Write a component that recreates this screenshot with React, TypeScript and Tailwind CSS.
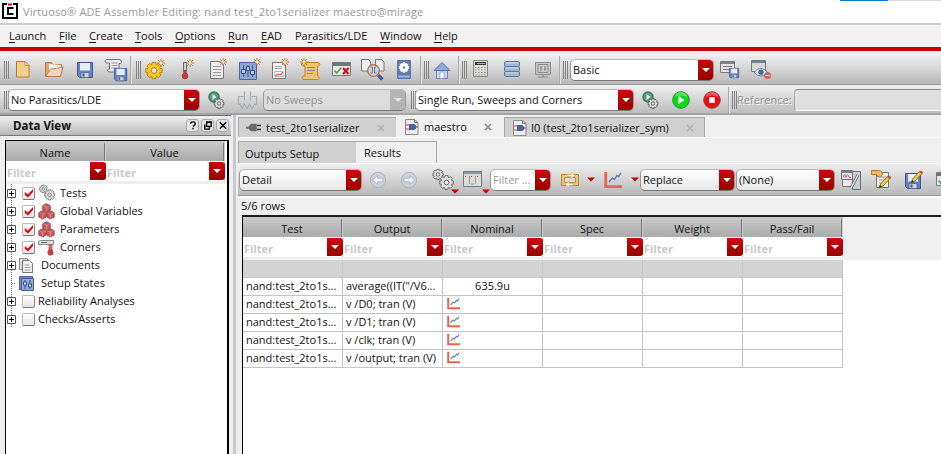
import React from "react";
import clsx from "clsx";

type P = { className?: string };

/* ---------- shared shapes ---------- */

function Svg({ children, className, box = "0 0 24 24" }: { children: React.ReactNode; className?: string; box?: string }) {
  return (
    <svg viewBox={box} className={clsx("block shrink-0", className ?? "size-6")} fill="none">
      {children}
    </svg>
  );
}

const Spark = ({ x = 17, y = 6 }: { x?: number; y?: number }) => (
  <g transform={`translate(${x} ${y})`} stroke="#bd7433" strokeWidth=".9">
    <path d="M-4 0h8M0-4v8M-3-3l6 6M3-3l-6 6" />
    <circle r="1.500" fill="#ffe9a8" stroke="none" />
  </g>
);

const Floppy = ({ x, y, s = 1 }: { x: number; y: number; s?: number }) => (
  <g transform={`translate(${x} ${y}) scale(${s})`}>
    <path d="M.5.5h15v15h-13l-2-2z" fill="#6585c2" stroke="#3d5590" />
    <path d="M3 1h10v7.500H3z" fill="#e8eefa" />
    <path d="M4 10.500h8v5H4z" fill="#cfd5e0" stroke="#44598a" strokeWidth=".7" />
    <path d="M5.500 11.500h2v3h-2z" fill="#3d5590" />
  </g>
);

/* Eight-toothed wheel outline with outer radius r */
function cogPath(r: number) {
  const pts: string[] = [];
  for (let i = 0; i < 8; i++) {
    [[-0.33, 0.78], [-0.22, 1], [0.22, 1], [0.33, 0.78]].forEach(([da, k]) => {
      const a = (i * Math.PI) / 4 + da;
      pts.push(`${(Math.cos(a) * r * k).toFixed(2)} ${(Math.sin(a) * r * k).toFixed(2)}`);
    });
  }
  return `M${pts.join("L")}Z`;
}

const Cog = ({ x, y, r, fill, stroke, hole = "#e4e4e4" }: { x: number; y: number; r: number; fill: string; stroke: string; hole?: string }) => (
  <g transform={`translate(${x} ${y})`} stroke={stroke} strokeWidth=".9" strokeLinejoin="round">
    <path d={cogPath(r)} fill={fill} />
    <circle r={r * 0.34} fill={hole} />
  </g>
);

const Pencil = ({ x, y }: { x: number; y: number }) => (
  <g transform={`translate(${x} ${y})`}>
    <path d="M0 12l1.500-4L9 0l2.500 2L4 10z" fill="#f4cf3c" stroke="#6b5a30" strokeWidth=".8" />
    <path d="M8 1l1.600-1.600L12.300 1 10.600 3z" fill="#d8463c" />
    <path d="M0 12l1.300-3 1.700 1.700z" fill="#333" />
  </g>
);

const Arrow = ({ className }: P) => (
  <svg viewBox="0 0 8 5" className={clsx("block h-[5px] w-2 shrink-0", className)}>
    <path d="M0 .5h8L4 4.500z" fill="#c00" />
  </svg>
);

/* ---------- toolbar icons ---------- */

const NewFile = () => (
  <Svg>
    <path d="M5.500 3.500h8.500l4 4v11.500H5.500z" fill="#f2d08c" stroke="#b57d30" />
    <path d="M14 3.500v4h4z" fill="#fff0c8" stroke="#bd8128" strokeWidth=".8" />
  </Svg>
);
const OpenFolder = () => (
  <Svg>
    <path d="M3.500 18V4.500h6l1 2h9V10" fill="#e5a566" stroke="#b8763a" />
    <path d="M7 6l12 1-1 5-11 2z" fill="#fff" />
    <path d="M3.500 18.500l5-7.500c3 0 8-1 12.500-2l-2.500 9.500z" fill="#ecd8c0" stroke="#b8804a" />
  </Svg>
);
const Save = () => <Svg><Floppy x={4} y={4} /></Svg>;
const SaveScript = () => (
  <Svg>
    <path d="M3 1.500h12c3 0 3 4 1 4h-1V14H6c-3 0-3-3-.5-3V5H3C.5 5 .500 1.500 3 1.500z" fill="#ececec" stroke="#6d6d6d" />
    <path d="M7.500 5h6M7.500 7.500h6M7.500 10h6" stroke="#999" />
    <Floppy x={10} y={10} s={0.82} />
  </Svg>
);
const SetupGear = () => (
  <Svg>
    <Cog x={10} y={12.500} r={8.400} fill="#f5c822" stroke="#b87812" />
    <Spark x={17} y={5} />
  </Svg>
);
const Thermo = () => (
  <Svg>
    <path d="M8.500 4.500h3v10h-3z" fill="#c8d2d8" stroke="#667" />
    <path d="M9 12h2v5H9z" fill="#d2353c" />
    <circle cx="10" cy="18" r="2.800" fill="#d2353c" stroke="#a3393f" />
    <Spark x={15} y={5} />
  </Svg>
);
const DocStar = () => (
  <Svg>
    <path d="M4.500 3.500h9l4 3v14h-13z" fill="#ededed" stroke="#777" />
    <path d="M7 8.500h8M7 11.500h8M7 14.500h8M7 17.500h8" stroke="#999" />
    <Spark x={17} y={4} />
  </Svg>
);
const Sliders = () => (
  <Svg>
    <path d="M2.500 4.500h17v17h-17z" fill="#91a9d2" stroke="#4a659c" />
    <path d="M6.500 7v12M11 7v12M15.500 7v12" stroke="#3f5b90" />
    <path d="M4.500 11.500h4v4h-4zM9.500 8.500h3v4h-3zM13.500 12.500h4v4h-4z" fill="#b9cbec" stroke="#304f86" />
    <Spark x={20} y={4} />
  </Svg>
);
const ChartDoc = () => (
  <Svg>
    <path d="M4.500 4.500h9l4 3v13h-13z" fill="#f2f2f2" stroke="#777" />
    <path d="M7 8.500h7M7 10.500h7" stroke="#aaa" />
    <path d="M7 13.500h8v5H7z" fill="#fff" stroke="#999" strokeWidth=".7" />
    <path d="M7 18l3-2 2 1 3-3" stroke="#d22" />
    <Spark x={17} y={4} />
  </Svg>
);
const Scroll = () => (
  <Svg>
    <path d="M4 4.500h15c3 1 2 3.500-.5 4V18c2 0 2.500 3.500 0 3.500H5c-3-.5-2-4 1-3.500V8.500C2 8 1 5 4 4.500z" fill="#efbf74" stroke="#c08433" />
    <path d="M8 9.500h8M8 12.500h8M8 15.500h6" stroke="#7d89a8" />
    <Spark x={5} y={4} />
  </Svg>
);
const CheckCross = ({ className }: P) => (
  <Svg className={className}>
    <path d="M2.500 4.500h18v13h-18z" fill="#e6e8e9" stroke="#777" />
    <path d="M3 5h17v3H3z" fill="#6c7880" />
    <path d="M4.500 12.500l2.200 2.500L11 10" stroke="#48a645" strokeWidth="1.800" />
    <path d="M13 10l5.500 6m0-6L13 16" stroke="#d60d1d" strokeWidth="2.200" />
  </Svg>
);
const SearchDocs = () => (
  <Svg>
    <path d="M.5 1.500h7l2 2.500v9h-9zM14.500 1.500h6l2.500 2.500v9h-8.500z" fill="#eee" stroke="#777" />
    <path d="M17 17l4.500 4.500" stroke="#3e5c8c" strokeWidth="3.200" />
    <circle cx="12.500" cy="12.500" r="5.800" fill="#ced9e7" fillOpacity=".9" stroke="#b56c3d" strokeWidth="1.300" />
    <path d="M9.500 9h2v6h-2M15.500 9h-2v6h2" stroke="#6b7788" />
  </Svg>
);
const Book = () => (
  <Svg>
    <path d="M5.500 2.500h13v18h-13z" fill="#5c7bb2" stroke="#5874a6" />
    <path d="M6 17.500h12v2H6z" fill="#9fb3d6" />
    <Cog x={12} y={9.500} r={4.800} fill="#fff" stroke="#fff" hole="#5576af" />
  </Svg>
);
const Home = () => (
  <Svg>
    <path d="M6.500 11v9.500h11V11" fill="#c8d5ee" stroke="#6f83ad" />
    <path d="M4 12.500L12 4.500l8 8z" fill="#8faadb" stroke="#5873a8" />
    <path d="M10 14h4v6.500h-4z" fill="#fff" stroke="#8698bb" strokeWidth=".7" />
  </Svg>
);
const Calc = () => (
  <Svg>
    <path d="M4.500 2.500h14v16h-14z" fill="#dcdcd8" stroke="#888" />
    <path d="M6 4h11v3H6z" fill="#343a32" />
    <path d="M8 5.500h8" stroke="#9bd820" />
    <path d="M6 9.500h11M6 12h11M6 14.500h11M6 17h11" stroke="#8b8c88" strokeWidth="1.100" strokeDasharray="1.500 1.500" />
  </Svg>
);
const Database = () => (
  <Svg>
    {[3.500, 8.500, 13.500].map((y) => (
      <g key={y}>
        <rect x="4.500" y={y} width="15" height="5" rx="1.200" fill="#9fb4cf" stroke="#60789b" />
        <path d={`M6 ${y + 1.500}h12`} stroke="#cfdcec" />
      </g>
    ))}
  </Svg>
);
const Monitor = () => (
  <Svg>
    <path d="M4.500 4.500h15v12h-15z" fill="#c9c9c9" stroke="#8e8e8e" />
    <path d="M7 6.500h10v8H7z" stroke="#8e8e8e" />
    <path d="M10 8v5m4-5v5M9 10h2m2 1h2M12 17v2M7 19h10" stroke="#858585" />
  </Svg>
);
const FormSave = () => (
  <Svg>
    <path d="M2.500 3.500h14v11h-14z" fill="#e4e4e4" stroke="#777" />
    <path d="M3 4h13v2H3z" fill="#6d8795" />
    <path d="M5 8.500h9M5 11.500h9" stroke="#777" />
    <Floppy x={11} y={10} s={0.63} />
  </Svg>
);
const EyeWindow = () => (
  <Svg>
    <path d="M2.500 2.500h14v11h-14z" fill="#d8d8d8" stroke="#777" />
    <path d="M3 3h13v2H3z" fill="#6d8795" />
    <path d="M5 14.500q6.500-8 14 0-7 7-14 0z" fill="#e2ebf6" stroke="#6f87ac" />
    <circle cx="12" cy="14.300" r="2.700" fill="#4a6c9f" />
    <circle cx="18.500" cy="17.500" r="3.500" fill="#cf6565" />
    <path d="M16.500 17.500h4" stroke="#fff" />
  </Svg>
);
const RunOptions = () => (
  <Svg>
    <circle cx="10" cy="9" r="5" fill="#5d9c79" stroke="#3a7f5a" strokeWidth="1.500" />
    <path d="M8.500 6v6l4-3z" fill="#e5f4eb" />
    <Cog x={15} y={15.500} r={5} fill="#ddd" stroke="#555" />
  </Svg>
);
const Parasitic = () => (
  <Svg>
    <path d="M2.500 17V8.500h6M15.500 8.500h5V17M8.500 3.500v9M14.500 3.500v9M2.500 17l1.500-1 2 4.500 2.500-4.500 2.500 4.500 2.500-4.500 2.500 4.500 2.500-4.500 2 1" stroke="#a5acb9" strokeWidth="1.200" />
  </Svg>
);
const Orb = ({ stop }: { stop?: boolean }) => (
  <Svg>
    <circle cx="12" cy="12" r="8.300" fill={stop ? "#e80a14" : "#08d914"} stroke={stop ? "#a2383d" : "#299030"} />
    <path d="M5.500 9q1.500-5 6.500-5t6.500 5q-6.500-3-13 0z" fill="#fff" fillOpacity=".3" />
    {stop ? <path d="M9.500 9.500h5v5h-5z" fill="#fff" stroke="#ffd0d0" /> : <path d="M9.500 8v8l6-4z" fill="#fff" />}
  </Svg>
);
const Nav = ({ right }: { right?: boolean }) => (
  <Svg>
    <circle cx="12" cy="12" r="7.700" fill="#c9d1dd" stroke="#a9b3c3" />
    <path transform={right ? "rotate(180 12 12)" : undefined} d="M6.500 12l5-4.500v2.700h5.500v3.600h-5.500v2.700z" fill="#f1f4f8" stroke="#a9b3c3" strokeWidth=".9" />
  </Svg>
);
const Gears = ({ className }: P) => (
  <Svg className={className}>
    <Cog x={7} y={6.500} r={5.300} fill="#dedede" stroke="#606060" />
    <Cog x={15.500} y={14.500} r={7} fill="#dedede" stroke="#606060" />
  </Svg>
);
const Columns = () => (
  <Svg>
    <path d="M2.500 3.500h18v15h-18z" fill="#dadada" stroke="#727b80" />
    <path d="M3 4h17v2H3z" fill="#8d989c" />
    <path d="M8.500 8v8m6-8v8M10 16h3" stroke="#999" />
    <path d="M4 8.500h3M10 8.500h3M16 8.500h3" stroke="#cb4a4a" strokeDasharray="1 2" />
  </Svg>
);
const Swap = () => (
  <Svg>
    <path d="M3.500 6.500h17v11h-17z" fill="#ecc47c" stroke="#c08533" />
    <path d="M6.500 9.500h11v5h-11z" fill="#dcdcd8" stroke="#c28b3d" />
    <path d="M13 4.500l4 3-4 3v-2H9v-2h4zM11 13.500l-4 3 4 3v-2h4v-2h-4z" fill="#fff6da" stroke="#c8a060" strokeWidth=".5" />
  </Svg>
);
const Chart = ({ className }: P) => (
  <Svg className={className} box="0 0 18 18">
    <path d="M1.700 1v14.700H18" stroke="#ee6350" strokeWidth="2.800" />
    <path d="M5 11l3.500-4 2 1.500 2.500-4 1.500 1L17 2" stroke="#5f7db5" strokeWidth="1.400" />
  </Svg>
);
const WaveEdit = () => (
  <Svg>
    <path d="M2.500 2.500h11v9h-11zM3.500 11.500h13v7h-13z" fill="#e7e7e7" stroke="#777" />
    <path d="M3 3h10v2H3z" fill="#71868f" />
    <path d="M4 9.500q1.500-6 3 0 1.500-6 3 0h2" stroke="#c65682" />
    <path d="M13.500 3.500h8v18h-8z" fill="#c9cdd1" stroke="#6c7173" />
    <path d="M12 20l7-13" stroke="#555" strokeWidth="2.800" />
    <path d="M12 20l7-13" stroke="#eee" strokeWidth="1.500" />
  </Svg>
);
const DocEdit = () => (
  <Svg>
    <path d="M6.500 4.500h12v15h-12z" fill="#eee" stroke="#777" />
    <path d="M9 9h7m-7 3h7m-7 3h5" stroke="#999" />
    <path d="M1.500 2.500h7q4 0 4 4-2 4-5 2l-1-2h-5z" fill="#f2b866" stroke="#b57a32" />
    <Pencil x={9} y={8} />
  </Svg>
);
const SaveEdit = () => <Svg><Floppy x={2} y={5} /><Pencil x={8} y={3} /></Svg>;

/* ---------- small icons ---------- */

const Cubes = () => (
  <Svg className="size-[17px]" box="0 0 17 17">
    {[[8.500, 4.800], [4.600, 11.800], [12.400, 11.800]].map(([x, y]) => (
      <g key={x} transform={`translate(${x} ${y})`}>
        <path d="M0-4l3.700 1.800v4.400L0 4l-3.700-1.800v-4.400z" fill="#c95858" stroke="#a04447" />
        <path d="M-3-2L0-.5 3-2M0-.5V3.500" stroke="#e29a9a" strokeWidth=".8" />
      </g>
    ))}
  </Svg>
);
const CornerIcon = () => (
  <Svg className="size-[17px]" box="0 0 17 17">
    <path d="M.500 5.500v-3l2-1h13v4z" fill="#ddd" stroke="#888" />
    <path d="M3 3.500h6" stroke="#666" />
    <path d="M11 5.500h3v7h-3z" fill="#d66" stroke="#965" strokeWidth=".8" />
    <circle cx="12.500" cy="13.500" r="2.700" fill="#d33c3c" stroke="#a33" strokeWidth=".6" />
  </Svg>
);
const Docs = () => (
  <Svg className="size-[17px]" box="0 0 17 17">
    <path d="M.5 1.500h8v11h-8z" fill="#ddd" stroke="#888" />
    <path d="M3.500 3.500h7l3 3v9h-10z" fill="#f1f1ed" stroke="#777" />
    <path d="M5.500 8h5m-5 2.500h6m-6 2.500h6" stroke="#aaa" />
  </Svg>
);
const States = () => (
  <Svg className="size-[17px]" box="0 0 17 17">
    <path d="M.5 1.500h13v13H.5z" fill="#6d88bb" stroke="#5269a0" />
    <path d="M2.500 3.500h12v12h-12z" fill="#93aad6" stroke="#465f93" />
    <path d="M6 5v9M11 5v9" stroke="#344f85" />
    <path d="M4.500 7h3v3h-3zM9.500 9h3v3h-3z" fill="#dbe5f6" stroke="#344f85" />
  </Svg>
);
const Plug = () => (
  <Svg className="h-4 w-[15px]" box="0 0 15 16">
    <path d="M0 7h2.500l2.500-3h5.500v7H5L2.500 8.500H0z" fill="#686868" stroke="#777" strokeWidth=".6" />
    <path d="M11 5.500h4M11 9.500h4" stroke="#333" strokeWidth="1.500" />
  </Svg>
);
const SchemDoc = () => (
  <Svg className="size-4" box="0 0 16 16">
    <path d="M1.500.5h9l3.500 3v12H1.500z" fill="#ececec" stroke="#888" />
    <path d="M10.500.5v3H14" stroke="#777" />
    <path d="M2 6h4m-4 4h4m6-2h2" stroke="#d33" strokeWidth="1.200" />
    <path d="M5 5h5q2.500 1 2.500 3T10 11H5z" fill="#46659f" />
  </Svg>
);
const Close = ({ className }: P) => (
  <Svg className={clsx("size-2", className)} box="0 0 8 8"><path d="M1 1l6 6m0-6L1 7" stroke="currentColor" strokeWidth="1.700" /></Svg>
);

/* ---------- controls ---------- */

const Grip = ({ className }: P) => (
  <div className={clsx("h-[18px] w-[5px] shrink-0 border-x border-[#858585] px-px", className)}>
    <div className="mx-auto h-full w-px bg-[#858585]" />
  </div>
);
const Break = ({ className }: P) => (
  <div className={clsx("h-full w-[2px] shrink-0 border-l border-[#aaa] bg-[#e4e4e4]", className)} />
);

function Drop({ className, off }: P & { off?: boolean }) {
  return (
    <div className={clsx("flex shrink-0 items-center justify-center rounded-r-[3px]", off ? "bg-[#b4b4b4]" : "bg-linear-to-b from-[#c90b0b] to-[#970000]", className)}>
      <svg viewBox="0 0 8 4" className="h-1 w-2"><path d="M0 0h8L4 4z" fill={off ? "#e4e4e4" : "#fff"} /></svg>
    </div>
  );
}

function Combo({ text, className, off, face = "bg-white" }: P & { text: string; off?: boolean; face?: string }) {
  return (
    <div className={clsx("flex h-[22px] shrink-0 overflow-hidden rounded-[5px] border border-[#999] border-t-[#bbb] border-b-[#777]", off ? "bg-[#dcdcdc]" : face, className)}>
      <div className={clsx("min-w-0 flex-1 overflow-hidden pl-[2px] leading-[20px] whitespace-nowrap", off && "text-[#929292]")}>{text}</div>
      <Drop off={off} className="-my-px -mr-px w-4" />
    </div>
  );
}

function Menu({ text, k = 0, className }: P & { text: string; k?: number }) {
  return (
    <span className={clsx("block shrink-0 whitespace-nowrap", className)}>
      {text.slice(0, k)}
      <span className="underline decoration-1 underline-offset-2">{text[k]}</span>
      {text.slice(k + 1)}
    </span>
  );
}

function Filter({ className }: P) {
  return (
    <div className={clsx("flex h-[20px] shrink-0 border-r border-[#ddd] bg-white", className)}>
      <span className="flex-1 pl-px leading-[23px] font-bold text-[#cacaca]">Filter</span>
      <Drop className="mt-px -mr-px h-[18px] w-4" />
    </div>
  );
}

function HeaderCell({ text, className, pad = "pt-px" }: P & { text: string; pad?: string }) {
  return (
    <div className={clsx("flex shrink-0 bg-linear-to-b from-[#c9c9c9] to-[#ababab]", className)}>
      <span className={clsx("flex-1 text-center leading-[20px]", pad)}>{text}</span>
      <span className="mt-[2px] h-[18px] w-[2px] border-r border-[#ccc] bg-[#777]" />
    </div>
  );
}

type Node = { label: string; icon?: React.ReactNode; check?: boolean; leaf?: boolean };
const NODES: Node[] = [
  { label: "Tests", icon: <Gears className="size-[18px]" />, check: true },
  { label: "Global Variables", icon: <Cubes />, check: true },
  { label: "Parameters", icon: <Cubes />, check: true },
  { label: "Corners", icon: <CornerIcon />, check: true },
  { label: "Documents", icon: <Docs /> },
  { label: "Setup States", icon: <States />, leaf: true },
  { label: "Reliability Analyses", check: false },
  { label: "Checks/Asserts", check: false },
];

function TreeRow({ node }: { node: Node }) {
  return (
    <div className="flex h-[18px] items-center">
      <div className={clsx("flex h-full shrink-0 items-center", node.check === undefined ? "w-[13px]" : "w-[14px]")}>
        <svg viewBox="0 0 10 18" className="h-[18px] w-[10px]" fill="none">
          <path d="M5.500 0v18" stroke="#777" strokeDasharray="1 1" />
          {node.leaf ? (
            <path d="M6 9.500h4" stroke="#777" strokeDasharray="1 1" />
          ) : (
            <>
              <path d="M1.500 5.500h8v8h-8z" fill="#fff" stroke="#555" />
              <path d="M3 9.500h5M5.500 7v5" stroke="#000" />
            </>
          )}
        </svg>
      </div>
      {node.check !== undefined && (
        <div className="mr-[3px] ml-[2px] flex size-[13px] shrink-0 items-center justify-center rounded-[2px] border border-[#bbb] border-r-[#888] border-b-[#777] bg-linear-to-b from-white to-[#e5e5e5]">
          {node.check && (
            <svg viewBox="0 0 10 10" className="size-[10px]"><path d="M.8 4l3 2.500L9 1v3L4 9.500.8 7z" fill="#d80b12" /></svg>
          )}
        </div>
      )}
      {node.icon && <div className="flex w-[22px] shrink-0 items-center">{node.icon}</div>}
      <span className="leading-[18px] whitespace-nowrap">{node.label}</span>
    </div>
  );
}

const COLUMNS = ["Test", "Output", "Nominal", "Spec", "Weight", "Pass/Fail"];
const RESULTS = [
  { output: 'average((IT("/V6...', value: "635.9u" },
  { output: "v /D0; tran (V)" },
  { output: "v /D1; tran (V)" },
  { output: "v /clk; tran (V)" },
  { output: "v /output; tran (V)" },
];

/* ---------- page ---------- */

export default function App() {
  return (
    <div className="flex h-[454px] w-[941px] flex-col overflow-hidden bg-[#efefef] font-['Open_Sans','Noto_Sans',sans-serif] text-[11px] text-[#111]">
      <header className="flex h-[23px] shrink-0 bg-white">
        <svg viewBox="0 0 16 16" className="mt-[3px] ml-[2px] size-4 shrink-0" fill="none">
          <path d="M5 1H1v14h14V1h-4" stroke="#000" strokeWidth="2" />
          <path d="M10.500 6V5H6v6h4.500v-1" stroke="#000" strokeWidth="2" />
          <path d="M6 1.500h4" stroke="#d00" strokeWidth="2" />
        </svg>
        <span className="ml-[5px] leading-[24px] tracking-[0.14px] whitespace-nowrap text-[#999]">Virtuoso® ADE Assembler Editing: nand test_2to1serializer maestro@mirage</span>
        <div className="ml-auto flex h-px w-[101px]"><i className="w-[48px] bg-[#0878d0]" /><i className="flex-1 bg-[#ddd]" /></div>
      </header>
      <nav className="flex h-6 shrink-0 border-t-2 border-[#ccc] bg-[#f2f2f2] pl-[9px] leading-[22px]">
        <Menu text="Launch" className="w-[50px]" />
        <Menu text="File" className="w-[30px]" />
        <Menu text="Create" className="w-[46px]" />
        <Menu text="Tools" className="w-10" />
        <Menu text="Options" className="w-[53px]" />
        <Menu text="Run" className="w-[33px]" />
        <Menu text="EAD" className="w-[34px]" />
        <Menu text="Parasitics/LDE" k={2} className="w-[85px]" />
        <Menu text="Window" className="w-[54px]" />
        <Menu text="Help" />
      </nav>
      <div className="h-1 shrink-0 bg-[#c00]" />

      <div className="flex h-[34px] shrink-0 items-center border-b border-[#999] bg-linear-to-b from-[#f0f0f0] from-10% to-[#b9b9b9] pt-[5px]">
        <Grip className="ml-1" />
        <div className="ml-[2px] flex gap-[7px]"><NewFile /><OpenFolder /><Save /><SaveScript /></div>
        <Break className="ml-[2px]" />
        <Grip className="ml-1" />
        <div className="ml-[3px] flex gap-[7px]">
          <SetupGear /><Thermo /><DocStar /><Sliders /><ChartDoc /><Scroll /><CheckCross /><SearchDocs /><Book />
        </div>
        <Break className="ml-1" />
        <Grip className="ml-[2px]" />
        <div className="ml-px"><Home /></div>
        <Break className="ml-1" />
        <Grip className="ml-[2px]" />
        <div className="ml-[2px] flex gap-[7px]"><Calc /><Database /><Monitor /></div>
        <Break className="ml-1" />
        <Grip className="ml-[2px]" />
        <Combo text="Basic" className="ml-[2px] w-[144px]" />
        <div className="ml-1 flex gap-[7px]"><FormSave /><EyeWindow /></div>
      </div>

      <div className="flex h-[30px] shrink-0 items-center border-b-2 border-[#a3a3a3] bg-linear-to-b from-[#f0f0f0] to-[#bdbdbd] pt-[2px]">
        <Grip className="ml-1" />
        <Combo text="No Parasitics/LDE" className="-ml-px w-[192px]" />
        <div className="ml-[4px]"><RunOptions /></div>
        <div className="ml-2"><Parasitic /></div>
        <Combo text="No Sweeps" off className="ml-[3px] w-[143px]" />
        <Grip className="ml-[5px]" />
        <Combo text="Single Run, Sweeps and Corners" className="-ml-px w-[219px]" />
        <div className="ml-1"><RunOptions /></div>
        <div className="ml-[7px] flex gap-[7px]"><Orb /><Orb stop /></div>
        <Break className="ml-1" />
        <Grip className="ml-[2px]" />
        <span className="w-[57px] text-[#929292] [text-shadow:1px_1px_#f8f8f8]">Reference:</span>
        <div className="h-[22px] flex-1 rounded-l-[4px] border border-r-0 border-[#aaa] border-t-[#888] border-b-white bg-[#dfdfdf]" />
      </div>

      <div className="flex min-h-0 flex-1">
        <aside className="flex w-[231px] shrink-0 flex-col">
          <div className="flex h-[21px] shrink-0 items-center gap-[2px] border-y border-[#777] bg-linear-to-b from-[#f0f0f0] to-[#b8b8b8] pr-[2px] pl-[13px]">
            <b className="mr-auto text-[11.500px] text-[#111]">Data View</b>
            {["M4 4q0-2 2.500-2T9 4q0 1.500-2.500 3M6.500 8.500v1.500", "M5 2h5v5H5zM3 5v5h5V7M5 2.500h5", "M3 2.500l7 7m0-7l-7 7"].map((d) => (
              <span key={d} className="-mt-px flex size-[13px] items-center justify-center rounded-[3px] border border-[#aaa] bg-[#e3e3e3]">
                <svg viewBox="0 0 13 12" className="h-[11px] w-3 shrink-0" fill="none"><path d={d} stroke="#000" strokeWidth="1.500" /></svg>
              </span>
            ))}
          </div>
          <div className="mt-[4px] ml-[5px] flex w-[224px] flex-1 flex-col border-t border-r-2 border-l border-black bg-white">
            <div className="flex h-5 shrink-0 pr-[2px]">
              <HeaderCell text="Name" pad="pt-[2px]" className="w-[100px]" />
              <HeaderCell text="Value" pad="pt-[2px]" className="flex-1" />
            </div>
            <div className="flex h-[23px] shrink-0 border-b-[3px] border-[#efefef]">
              <Filter className="w-[100px]" />
              <Filter className="w-[119px]" />
            </div>
            <div>{NODES.map((n) => <TreeRow key={n.label} node={n} />)}</div>
          </div>
        </aside>
        <div className="w-[7px] shrink-0 border-x-2 border-[#eee] bg-[#c8c8d0]" />

        <main className="flex min-w-0 flex-1 flex-col">
          <div className="flex h-[23px] shrink-0 border-b border-white pt-[2px]">
            <div className="flex w-[158px] items-center border-t border-l border-[#aaa] bg-[#d0d0d0] pt-px pl-[7px]">
              <Plug /><span className="ml-[5px] w-[111px]">test_2to1serializer</span><Close className="text-[#b5b5b5]" />
            </div>
            <div className="flex w-[108px] items-center bg-[#f0f0f0] pl-2">
              <SchemDoc /><span className="ml-1 w-[60px]">maestro</span><Close className="text-[#8d8d8d]" />
            </div>
            <div className="flex w-[201px] items-center border border-b-0 border-[#aaa] bg-[#d0d0d0] pt-px pl-[7px]">
              <SchemDoc /><span className="ml-[3px] w-[155px]">I0 (test_2to1serializer_sym)</span><Close className="text-[#b5b5b5]" />
            </div>
          </div>
          <div className="flex h-[26px] shrink-0 items-stretch border-b border-white pt-[3px]">
            <div className="w-[118px] border-t border-l border-[#aaa] bg-[#d0d0d0] pl-[6px] leading-[24px]">Outputs Setup</div>
            <div className="w-[81px] border-t border-r border-[#aaa] pl-2 leading-[22px]">Results</div>
          </div>
          <div className="flex h-8 shrink-0 items-center border-b border-[#999] bg-linear-to-b from-[#efefef] to-[#b9b9b9]">
            <Combo text="Detail" face="bg-linear-to-b from-white to-[#e6e6e6]" className="ml-px w-[123px]" />
            <div className="ml-[4px] flex gap-[7px]"><Nav /><Nav right /></div>
            <i className="ml-[4px] h-[18px] w-px bg-[#777]" />
            <div className="ml-[6px]"><Gears /></div>
            <Arrow className="mt-[23px] -ml-[4px]" />
            <div className="ml-[2px]"><Columns /></div>
            <Arrow className="mt-[23px] -ml-[3px]" />
            <Combo text="Filter ..." className="ml-0 w-[61px] text-[#999]" />
            <i className="ml-px h-[18px] w-px bg-[#777]" />
            <div className="ml-[6px]"><Swap /></div>
            <Arrow className="ml-[5px]" />
            <i className="ml-px h-[18px] w-px bg-[#777]" />
            <Chart className="ml-[8px] size-[18px]" />
            <Arrow className="ml-[9px]" />
            <Combo text="Replace" face="bg-linear-to-b from-white to-[#e6e6e6]" className="ml-px w-[95px]" />
            <Combo text="(None)" face="bg-linear-to-b from-white to-[#e6e6e6]" className="ml-px w-[99px]" />
            <div className="ml-[4px] flex gap-[7px]"><WaveEdit /><DocEdit /><span className="pl-[2px]"><SaveEdit /></span><CheckCross /></div>
          </div>
          <div className="h-[19px] shrink-0 border-t-2 border-white pl-[3px] leading-[16px]">5/6 rows</div>
          <div className="ml-1 flex min-h-0 flex-1 flex-col border-t-2 border-l border-t-[#1c1c1c] border-l-black bg-white">
            <div className="h-[43px] shrink-0 bg-[#efefef]">
              <div className="flex h-5">{COLUMNS.map((c) => <HeaderCell key={c} text={c} pad="pt-[2px]" className="w-[100px]" />)}</div>
              <div className="flex">{COLUMNS.map((c) => <Filter key={c} className="w-[100px]" />)}</div>
            </div>
            <div className="flex h-[18px] shrink-0">
              {COLUMNS.map((c) => <div key={c} className="w-[100px] border-r border-b border-[#c4c4c4] bg-[#d3d3d3]" />)}
            </div>
            {RESULTS.map((r) => (
              <div key={r.output} className="flex h-[18px] shrink-0 leading-[15px] whitespace-nowrap">
                <div className="w-[100px] border-r border-b border-[#c4c4c4] pl-[3px]">nand:test_2to1s...</div>
                <div className="w-[100px] border-r border-b border-[#c4c4c4] pl-[3px]">{r.output}</div>
                <div className="flex w-[100px] items-start justify-center border-r border-b border-[#c4c4c4]">
                  {r.value ?? <Chart className="mt-px mr-auto ml-1 size-[13px]" />}
                </div>
                {COLUMNS.slice(3).map((c) => <div key={c} className="w-[100px] border-r border-b border-[#c4c4c4]" />)}
              </div>
            ))}
          </div>
        </main>
      </div>
    </div>
  );
}
